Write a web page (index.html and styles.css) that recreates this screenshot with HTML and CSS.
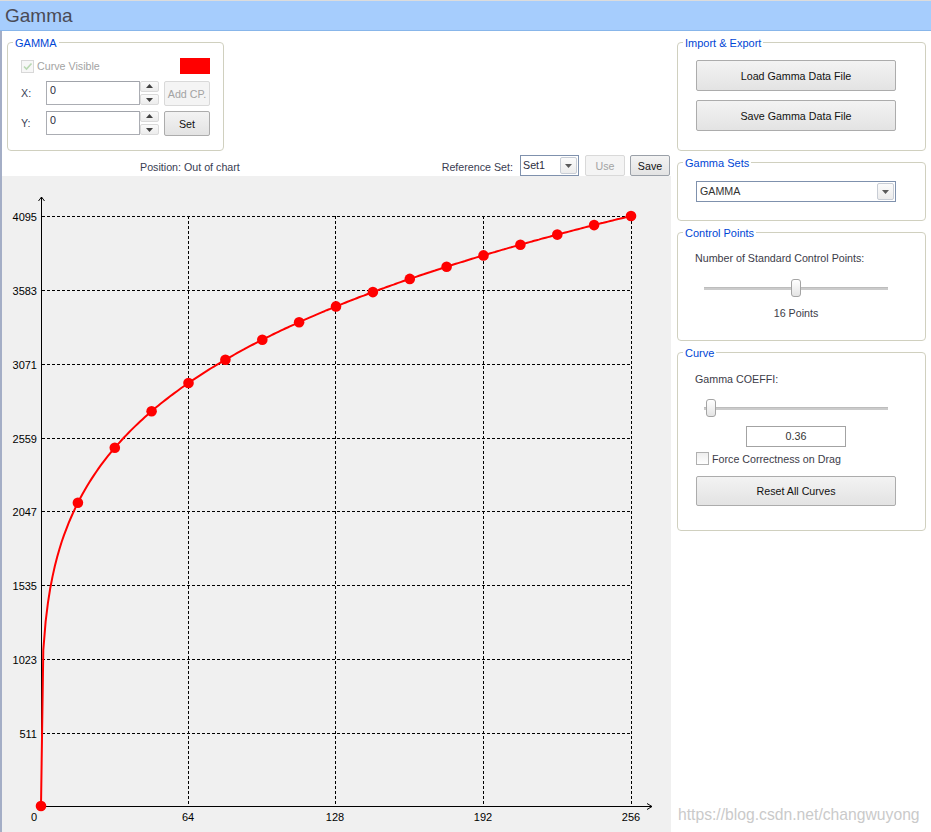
FILE: index.html
```html
<!DOCTYPE html>
<html>
<head>
    <meta charset="utf-8">
    <title>Gamma</title>
    <link rel="stylesheet" href="styles.css">
</head>
<body>
    <div class="title-bar">Gamma</div>
    <div class="main">
        <div class="left">
            <div class="top">
                <fieldset class="group gamma-group">
                    <legend>GAMMA</legend>
                    <div class="gamma-row first">
                        <span class="check disabled">
                            <svg width="11" height="11" viewBox="0 0 11 11"><path d="M2 5.5 L4.5 8 L9.5 2.5" fill="none" stroke="#b9d8b2" stroke-width="1.6"/></svg>
                        </span>
                        <span class="muted">Curve Visible</span>
                        <span class="swatch"></span>
                    </div>
                    <div class="gamma-row">
                        <span class="axis-label">X:</span>
                        <div class="textbox">0</div>
                        <div class="spin">
                            <span class="spin-btn"><svg width="7" height="5" viewBox="0 0 7 5"><path d="M3.5 0 L7 4 L0 4 Z" fill="#404040"/></svg></span>
                            <span class="spin-btn"><svg width="7" height="5" viewBox="0 0 7 5"><path d="M0 1 L7 1 L3.5 5 Z" fill="#404040"/></svg></span>
                        </div>
                        <button class="btn small" disabled>Add CP.</button>
                    </div>
                    <div class="gamma-row">
                        <span class="axis-label">Y:</span>
                        <div class="textbox">0</div>
                        <div class="spin">
                            <span class="spin-btn"><svg width="7" height="5" viewBox="0 0 7 5"><path d="M3.5 0 L7 4 L0 4 Z" fill="#404040"/></svg></span>
                            <span class="spin-btn"><svg width="7" height="5" viewBox="0 0 7 5"><path d="M0 1 L7 1 L3.5 5 Z" fill="#404040"/></svg></span>
                        </div>
                        <button class="btn small">Set</button>
                    </div>
                </fieldset>
            </div>

            <div class="toolbar">
                <span class="position">Position: Out of chart</span>
                <span class="ref-label">Reference Set:</span>
                <div class="select ref-select">
                    <span class="value">Set1</span>
                    <span class="arrow"><svg width="7" height="4" viewBox="0 0 7 4"><path d="M0 0 L7 0 L3.5 4 Z" fill="#5a5a5a"/></svg></span>
                </div>
                <button class="btn tool" disabled>Use</button>
                <button class="btn tool save">Save</button>
            </div>

            <svg class="chart" width="669" height="656" viewBox="2 176 669 656">
                <path class="grid" d="M42 216.5H631 M42 290.5H631 M42 364.5H631 M42 438.5H631 M42 511.5H631 M42 585.5H631 M42 659.5H631 M42 733.5H631
                                      M188.5 216V806 M335.5 216V806 M483.5 216V806 M631.5 216V806"/>
                <path class="axis" d="M41.5 806.5V197 M38.5 201 L41.5 197 L44.5 201 M41 806.5H652 M647 803.5 L652 806.5 L647 809.5"/>
                <g class="y-labels">
                    <text x="37" y="221">4095</text>
                    <text x="37" y="295">3583</text>
                    <text x="37" y="369">3071</text>
                    <text x="37" y="443">2559</text>
                    <text x="37" y="516">2047</text>
                    <text x="37" y="590">1535</text>
                    <text x="37" y="664">1023</text>
                    <text x="37" y="738">511</text>
                </g>
                <g class="x-labels">
                    <text x="34" y="821">0</text>
                    <text x="188" y="821">64</text>
                    <text x="335" y="821">128</text>
                    <text x="483" y="821">192</text>
                    <text x="631" y="821">256</text>
                </g>
                <path id="curve" class="curve" d=""/>
                <g id="dots" class="dots"></g>
            </svg>
        </div>

        <div class="right">
            <fieldset class="group io-group">
                <legend>Import &amp; Export</legend>
                <button class="btn wide first">Load Gamma Data File</button>
                <button class="btn wide second">Save Gamma Data File</button>
            </fieldset>

            <fieldset class="group sets-group">
                <legend>Gamma Sets</legend>
                <div class="select sets-select">
                    <span class="value">GAMMA</span>
                    <span class="arrow"><svg width="7" height="4" viewBox="0 0 7 4"><path d="M0 0 L7 0 L3.5 4 Z" fill="#5a5a5a"/></svg></span>
                </div>
            </fieldset>

            <fieldset class="group points-group">
                <legend>Control Points</legend>
                <div class="caption">Number of Standard Control Points:</div>
                <div class="slider points-slider">
                    <div class="track"></div>
                    <div class="thumb" style="left: 95px;"></div>
                </div>
                <div class="points-value">16 Points</div>
            </fieldset>

            <fieldset class="group curve-group">
                <legend>Curve</legend>
                <div class="caption">Gamma COEFFI:</div>
                <div class="slider coeff-slider">
                    <div class="track"></div>
                    <div class="thumb" style="left: 10px;"></div>
                </div>
                <div class="coeff-box">0.36</div>
                <div class="force-row">
                    <span class="check"></span>
                    <span>Force Correctness on Drag</span>
                </div>
                <button class="btn wide reset">Reset All Curves</button>
            </fieldset>
        </div>
    </div>

    <div class="watermark">https://blog.csdn.net/changwuyong</div>

    <script>
        const svgNS = 'http://www.w3.org/2000/svg';
        const gamma = 0.24;

        function toPx(x) {
            return 41 + x * 590 / 256;
        }

        function toPy(x) {
            return 806 - 590 * Math.pow(x / 256, gamma);
        }

        let d = '';
        for (let x = 0; x <= 256; x++) {
            d += (x === 0 ? 'M' : ' L') + toPx(x).toFixed(1) + ' ' + toPy(x).toFixed(1);
        }
        document.getElementById('curve').setAttribute('d', d);

        const dots = document.getElementById('dots');
        for (let x = 0; x <= 256; x += 16) {
            const c = document.createElementNS(svgNS, 'circle');
            c.setAttribute('cx', toPx(x).toFixed(1));
            c.setAttribute('cy', toPy(x).toFixed(1));
            c.setAttribute('r', 5.3);
            dots.appendChild(c);
        }
    </script>
</body>
</html>
```

FILE: styles.css
```css
* {
    box-sizing: border-box;
}

body {
    margin: 0;
    width: 931px;
    height: 832px;
    overflow: hidden;
    position: relative;
    background-color: #fff;
    font-family: "Liberation Sans", Arial, sans-serif;
    font-size: 10.7px;
    color: #333;
}

.title-bar {
    height: 31px;
    border-top: 1px solid #dcdcdc;
    border-bottom: 1px solid #88b6ea;
    background-color: #a6cdfd;
    color: #4a4a55;
    font-size: 19px;
    line-height: 29px;
    padding-left: 5px;
}

.main {
    display: flex;
    height: 801px;
    border-left: 2px solid #a4aec6;
}

.left {
    width: 669px;
    display: flex;
    flex-direction: column;
}

.top {
    height: 124px;
    padding: 5px 0 0 5px;
}

/* group boxes */
fieldset.group {
    margin: 0;
    border: 1px solid #d0d0bf;
    border-radius: 4px;
    min-width: 0;
}

fieldset.group legend {
    color: #0046d5;
    padding: 1px 2px 0;
    height: 13px;
    line-height: 13px;
    font-size: 11px;
}

.gamma-group {
    width: 217px;
    height: 115px;
    padding: 0 13px;
}

.gamma-group legend {
    margin-left: -8px;
}

.gamma-row {
    display: flex;
    align-items: flex-start;
    height: 25px;
    margin-top: 5px;
}

.gamma-row.first {
    height: 16px;
    margin-top: 9px;
    align-items: center;
}

.gamma-row.first + .gamma-row {
    margin-top: 7px;
}

.muted {
    color: #a3a3a3;
    margin-left: 3px;
}

.check {
    width: 13px;
    height: 13px;
    border: 1px solid #8e8f8f;
    background: linear-gradient(#eeeeee, #ffffff);
    display: flex;
    align-items: center;
    justify-content: center;
}

.check.disabled {
    border-color: #d8d8d8;
    background: #f7f7f7;
}

.swatch {
    margin-left: auto;
    width: 30px;
    height: 16px;
    background-color: #ff0000;
}

.axis-label {
    width: 25px;
    line-height: 24px;
    color: #3a3f58;
}

.textbox {
    width: 94px;
    height: 24px;
    border: 1px solid #abadb3;
    border-top-color: #a0a3aa;
    background-color: #fff;
    padding: 2px 3px;
    color: #2a2a40;
}

.spin {
    width: 19px;
    height: 24px;
    display: flex;
    flex-direction: column;
    justify-content: space-between;
}

.spin-btn {
    height: 11px;
    border: 1px solid #dadada;
    border-radius: 2px;
    background: linear-gradient(#fafafa, #ececec);
    display: flex;
    align-items: center;
    justify-content: center;
}

/* buttons */
.btn {
    font-family: inherit;
    font-size: 10.7px;
    color: #111;
    border: 1px solid #acacac;
    border-radius: 2px;
    background: linear-gradient(#f3f3f3, #e3e3e3);
    padding: 0;
    cursor: pointer;
}

.btn:disabled {
    color: #a3a3a3;
    border-color: #d9d9d9;
    background: #f4f4f4;
    cursor: default;
}

.btn.small {
    width: 46px;
    height: 25px;
    margin-left: 5px;
}

.btn.tool {
    width: 40px;
    height: 21px;
    margin-left: 6px;
}

.btn.tool.save {
    margin-left: 5px;
    border-color: #9aa0a8;
}

.btn.wide {
    display: block;
    width: 200px;
    height: 31px;
}

/* toolbar above the chart */
.toolbar {
    height: 21px;
    display: flex;
    align-items: center;
    padding-left: 138px;
    padding-right: 1px;
    color: #3a3d52;
}

.position {
    padding-top: 2px;
}

.ref-label {
    margin-left: auto;
    margin-right: 7px;
    padding-top: 2px;
}

.select {
    display: flex;
    height: 21px;
    border: 1px solid #7f91ad;
    background-color: #fff;
}

.select .value {
    flex: 1;
    padding-left: 2px;
    line-height: 19px;
    color: #2c2c3c;
}

.select .arrow {
    width: 17px;
    margin: 1px;
    border: 1px solid #c8cdd5;
    border-radius: 2px;
    background: linear-gradient(#fbfbfb, #ececec);
    display: flex;
    align-items: center;
    justify-content: center;
}

.ref-select {
    width: 59px;
}

/* chart */
.chart {
    display: block;
    background-color: #f0f0f0;
}

.chart .grid {
    fill: none;
    stroke: #000;
    stroke-width: 1;
    stroke-dasharray: 3 2;
}

.chart .axis {
    fill: none;
    stroke: #000;
    stroke-width: 1;
}

.chart text {
    font-family: "Liberation Sans", Arial, sans-serif;
    font-size: 11px;
    fill: #000;
}

.y-labels text {
    text-anchor: end;
}

.x-labels text {
    text-anchor: middle;
}

.chart .curve {
    fill: none;
    stroke: #ff0000;
    stroke-width: 2;
    stroke-linejoin: round;
}

.chart .dots circle {
    fill: #ff0000;
}

/* right column */
.right {
    width: 249px;
    margin-left: 6px;
    padding-top: 5px;
    display: flex;
    flex-direction: column;
    gap: 5px;
}

.right fieldset.group {
    width: 249px;
    padding: 0 0 0 18px;
}

.right fieldset.group legend {
    margin-left: -13px;
}

.io-group {
    height: 115px;
}

.io-group .first {
    margin-top: 11px;
}

.io-group .second {
    margin-top: 9px;
}

.sets-group {
    height: 65px;
}

.sets-select {
    width: 200px;
    margin-top: 12px;
}

.sets-select .value {
    padding-left: 3px;
    color: #333;
}

.points-group {
    height: 115px;
}

.curve-group {
    height: 185px;
}

.caption {
    line-height: 13px;
    margin-left: -1px;
    color: #3c3c48;
}

.points-group .caption,
.curve-group .caption {
    margin-top: 14px;
}

.points-group .caption {
    margin-top: 13px;
}

.slider {
    position: relative;
    width: 200px;
    height: 18px;
}

.points-slider {
    margin-top: 14px;
}

.coeff-slider {
    margin-top: 13px;
}

.slider .track {
    position: absolute;
    left: 8px;
    right: 8px;
    top: 8px;
    height: 3px;
    background-color: #cbcbcb;
    border-top: 1px solid #bdbdbd;
}

.slider .thumb {
    position: absolute;
    top: 0;
    width: 10px;
    height: 18px;
    border: 1px solid #a4a4a4;
    border-radius: 3px;
    background: linear-gradient(#ffffff, #e4e4e4);
}

.points-value {
    width: 200px;
    margin-top: 10px;
    line-height: 13px;
    text-align: center;
    color: #3c3c48;
}

.coeff-box {
    width: 100px;
    height: 21px;
    margin: 9px 0 0 50px;
    border: 1px solid #a3a3a3;
    line-height: 19px;
    text-align: center;
    color: #333;
}

.force-row {
    display: flex;
    align-items: center;
    gap: 3px;
    height: 13px;
    margin-top: 5px;
    color: #3c3c48;
}

.force-row .check {
    border-color: #b0b0b0;
}

.btn.reset {
    height: 30px;
    margin-top: 11px;
}

.watermark {
    position: absolute;
    left: 678px;
    top: 806px;
    font-size: 15.7px;
    color: #cacaca;
    white-space: nowrap;
}
```
